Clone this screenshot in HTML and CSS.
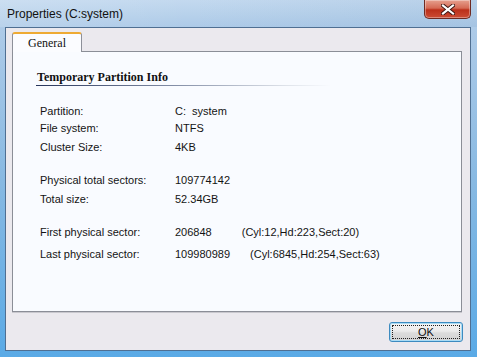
FILE: index.html
```html
<!DOCTYPE html>
<html lang="en">
<head>
<meta charset="UTF-8">
<title>Properties (C:system)</title>
<link rel="stylesheet" href="styles.css">
</head>
<body>

<div class="window">
    <div class="titlebar">
        <span class="title">Properties (C:system)</span>
        <div class="close">
            <svg width="14" height="11" viewBox="0 0 14 11">
                <path d="M2 1.5 L12 9.5 M12 1.5 L2 9.5" stroke="#3b1410" stroke-width="4" stroke-linecap="square"/>
                <path d="M2 1.5 L12 9.5 M12 1.5 L2 9.5" stroke="#ffffff" stroke-width="2.2" stroke-linecap="square"/>
            </svg>
        </div>
    </div>
    <div class="frame_body">
        <div class="client">
            <div class="tabs">
                <div class="tab">General</div>
            </div>
            <div class="panel">
                <h2 class="heading">Temporary Partition Info</h2>
                <div class="rows">
                    <div class="row"><span class="label">Partition:</span><span class="value">C: system</span></div>
                    <div class="row"><span class="label">File system:</span><span class="value">NTFS</span></div>
                    <div class="row gap_small"><span class="label">Cluster Size:</span><span class="value">4KB</span></div>

                    <div class="row gap_big"><span class="label">Physical total sectors:</span><span class="value">109774142</span></div>
                    <div class="row gap_small"><span class="label">Total size:</span><span class="value">52.34GB</span></div>

                    <div class="row gap_big"><span class="label">First physical sector:</span><span class="value">206848<span class="chs chs_first">(Cyl:12,Hd:223,Sect:20)</span></span></div>
                    <div class="row gap_mid"><span class="label">Last physical sector:</span><span class="value">109980989<span class="chs chs_last">(Cyl:6845,Hd:254,Sect:63)</span></span></div>
                </div>
            </div>
            <div class="actions">
                <button class="ok_button"><span class="focus_ring"><u>O</u>K</span></button>
            </div>
        </div>
    </div>
</div>

</body>
</html>
```

FILE: styles.css
```css
body {
    margin: 0;
    font-family: "Liberation Sans", Arial, sans-serif;
    background: #ffffff;
}

.window {
    width: 477px;
    height: 357px;
    display: flex;
    flex-direction: column;
    background: linear-gradient(to bottom, #c3d9ef 0, #aecbe8 26px, #88b9e2 180px, #5aaae6 100%);
    box-sizing: border-box;
}

/* title bar */
.titlebar {
    height: 27px;
    display: flex;
    justify-content: space-between;
    align-items: flex-start;
    background: linear-gradient(to right, rgba(255,255,255,0.15), rgba(255,255,255,0) 40%, rgba(60,110,160,0.08) 100%);
}

.title {
    padding: 7px 0 0 7px;
    font-size: 12px;
    line-height: 14px;
    color: #111111;
}

.close {
    width: 47px;
    height: 19px;
    margin-right: 6px;
    box-sizing: border-box;
    border: 1px solid #6e2a22;
    border-top: 0;
    border-radius: 0 0 5px 5px;
    background: linear-gradient(to bottom, #e6a08f 0, #d56a55 45%, #bb2f1a 55%, #cc4c34 100%);
    display: flex;
    justify-content: center;
    align-items: center;
    box-shadow: inset 0 0 0 1px rgba(255,255,255,0.35);
}

/* frame + client */
.frame_body {
    flex: 1;
    display: flex;
    padding: 0 6px 6px 5px;
}

.client {
    flex: 1;
    border: 1px solid #4f6f92;
    background: #ebe9ee;
    padding: 4px 8px 7px 6px;
    display: flex;
    flex-direction: column;
}

.tabs {
    display: flex;
    height: 20px;
    margin-bottom: -1px;
    position: relative;
    z-index: 1;
}

.tab {
    width: 70px;
    box-sizing: border-box;
    border: 1px solid #8d9099;
    border-top: 2px solid #eeaa33;
    border-bottom: 0;
    border-radius: 3px 3px 0 0;
    background: #fbfcff;
    font-family: "Liberation Serif", "Times New Roman", serif;
    font-size: 12px;
    line-height: 18px;
    text-align: center;
    color: #111111;
}

.panel {
    height: 261px;
    box-sizing: border-box;
    border: 1px solid #8b8e97;
    background: #f9fbff;
    padding: 18px 0 0 23px;
    box-shadow: 0 1px 0 #c9c8ce;
}

.heading {
    margin: 0;
    width: 294px;
    font-family: "Liberation Serif", "Times New Roman", serif;
    font-size: 12px;
    line-height: 15px;
    font-weight: bold;
    color: #111111;
    padding-left: 1px;
    padding-bottom: 1px;
    background: linear-gradient(to right, #26345a 0, #7f8aa3 45%, #dfe3ea 85%, rgba(249,251,255,0) 100%) no-repeat left bottom / 100% 1px;
}

.rows {
    padding: 17px 0 0 4px;
    font-size: 11px;
    color: #141414;
}

.row {
    display: flex;
    height: 17px;
    line-height: 17px;
}

.gap_small {
    margin-top: 2px;
}

.gap_mid {
    margin-top: 5px;
}

.gap_big {
    margin-top: 16px;
}

.label {
    width: 135px;
}

.value {
    word-spacing: 3px;
}

.chs_first {
    margin-left: 30px;
}

.chs_last {
    margin-left: 20px;
}

/* bottom buttons */
.actions {
    display: flex;
    justify-content: flex-end;
    margin-top: 10px;
    margin-right: -1px;
}

.ok_button {
    width: 74px;
    height: 20px;
    padding: 2px;
    box-sizing: border-box;
    border: 1px solid #3d8bc0;
    border-radius: 3px;
    background: linear-gradient(to bottom, #f4f4f4 0, #ebebeb 45%, #dcdcdc 55%, #d2d2d2 100%);
    box-shadow: inset 0 0 0 1px #a9dcf6;
    font-family: "Liberation Sans", Arial, sans-serif;
    font-size: 11px;
    color: #111111;
    display: flex;
}

.focus_ring {
    flex: 1;
    border: 1px dotted #222222;
    line-height: 12px;
    text-align: center;
}
```
